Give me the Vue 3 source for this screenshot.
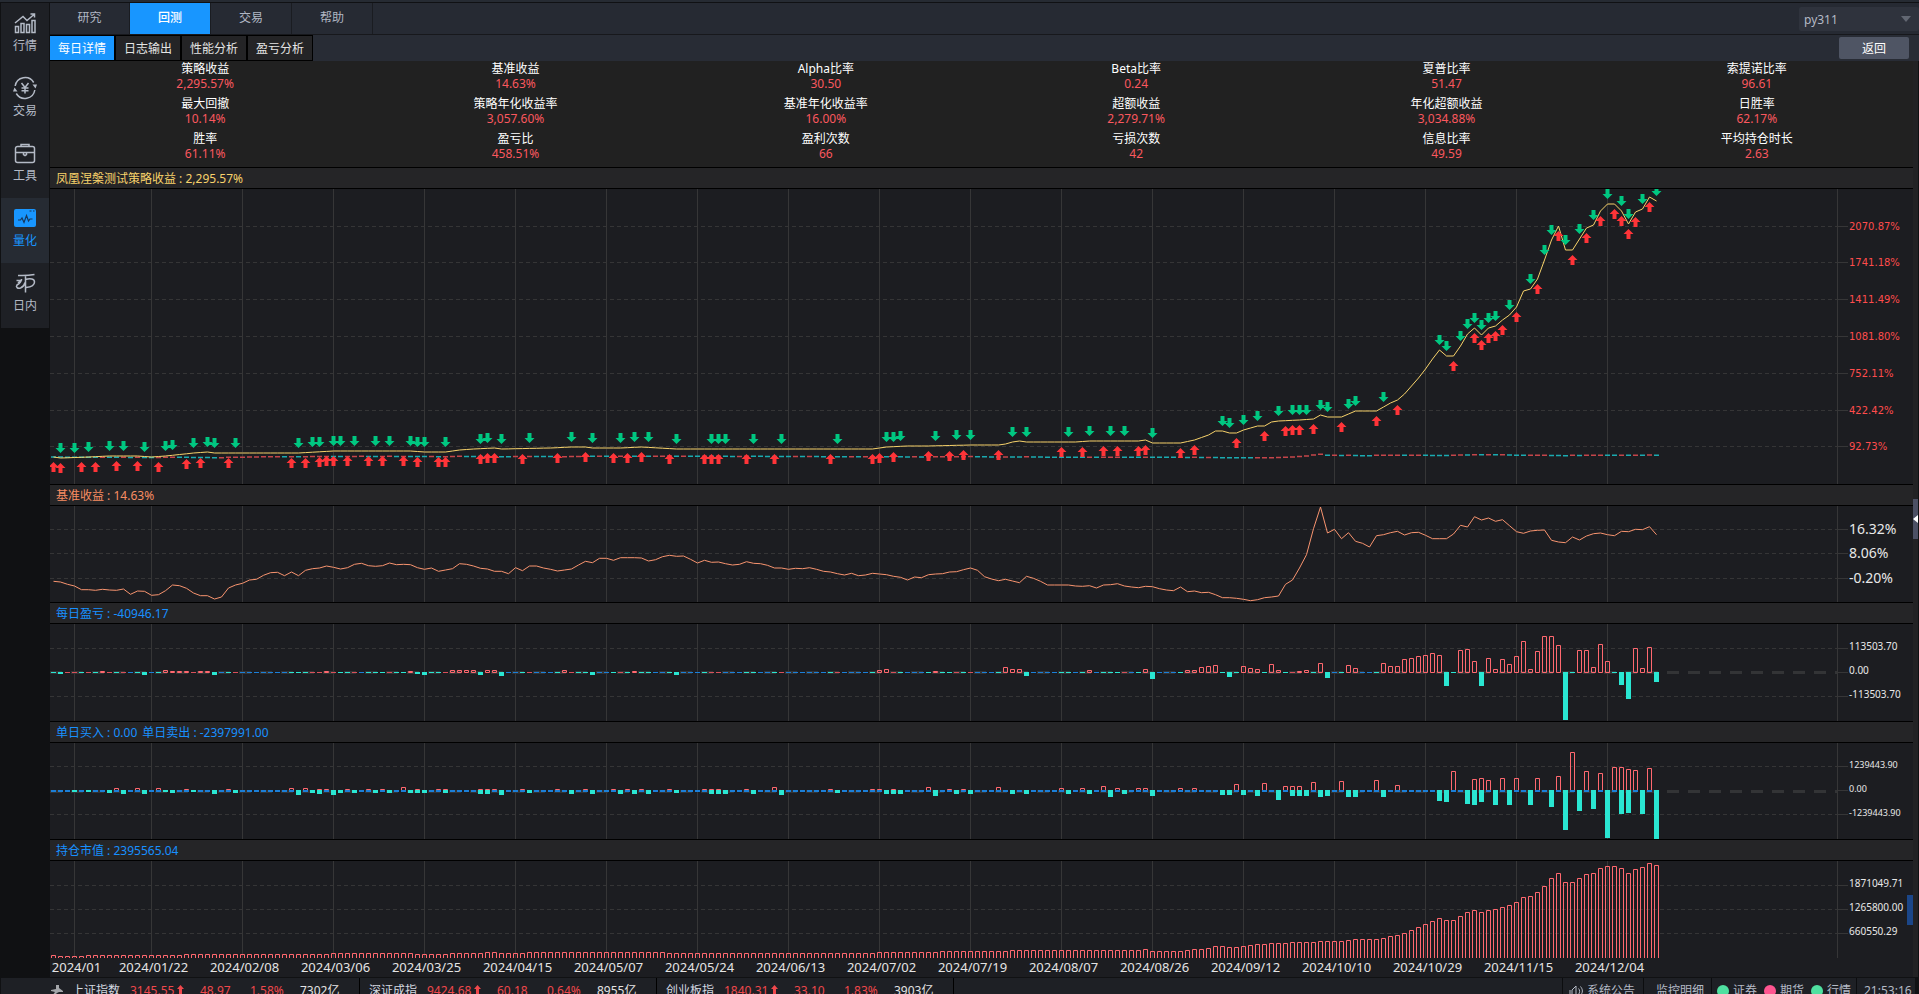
<script setup>
import { ref } from 'vue'

const sideItems = [
  { id: 'quote', label: '行情' },
  { id: 'trade', label: '交易' },
  { id: 'tools', label: '工具' },
  { id: 'quant', label: '量化' },
  { id: 'intraday', label: '日内' },
]
const activeSide = ref('quant')

const tabs = ['研究', '回测', '交易', '帮助']
const activeTab = ref('回测')

const subTabs = ['每日详情', '日志输出', '性能分析', '盈亏分析']
const activeSub = ref('每日详情')

const envName = ref('py311')

const stats = [
  ['策略收益', '2,295.57%'], ['基准收益', '14.63%'], ['Alpha比率', '30.50'],
  ['Beta比率', '0.24'], ['夏普比率', '51.47'], ['索提诺比率', '96.61'],
  ['最大回撤', '10.14%'], ['策略年化收益率', '3,057.60%'], ['基准年化收益率', '16.00%'],
  ['超额收益', '2,279.71%'], ['年化超额收益', '3,034.88%'], ['日胜率', '62.17%'],
  ['胜率', '61.11%'], ['盈亏比', '458.51%'], ['盈利次数', '66'],
  ['亏损次数', '42'], ['信息比率', '49.59'], ['平均持仓时长', '2.63'],
]

// One trading day takes STEP pixels; its bar is centred on cx(day).
const STEP = 7
const cx = (i) => 3.5 + i * STEP
const DAYS = 230

// Strategy equity curve: [day, y] knots, straight in between.
const equityKnots = [
  [0, 268], [1, 269], [5, 268], [8, 267], [12, 267], [14, 268], [16, 267], [20, 264], [22, 263],
  [23, 264], [35, 264], [40, 262], [47, 262], [51, 262], [53, 263], [56, 263], [58, 261], [60, 260],
  [63, 259], [64, 260], [71, 259], [74, 258], [76, 258], [77, 259], [81, 259], [84, 258], [89, 260],
  [117, 260], [119, 258], [122, 257], [125, 257], [131, 256], [135, 256], [136, 255], [137, 253],
  [138, 252], [139, 253], [146, 253], [148, 252], [155, 252], [156, 251], [157, 254], [161, 254],
  [163, 251], [165, 246], [166, 242], [167, 242], [168, 244], [169, 244], [170, 241], [171, 239],
  [172, 237], [173, 237], [174, 233], [175, 232], [178, 231], [180, 230], [181, 226], [182, 228],
  [184, 228], [185, 225], [186, 222], [189, 222], [190, 218], [191, 214], [192, 211], [193, 205],
  [194, 197], [195, 189], [196, 180], [197, 170], [198, 161], [199, 167], [200, 167], [201, 157],
  [202, 145], [203, 139], [204, 146], [205, 139], [206, 137], [207, 131], [208, 126], [209, 118],
  [210, 102], [211, 100], [212, 90], [213, 71], [214, 51], [215, 37], [216, 61], [217, 61],
  [218, 50], [219, 39], [220, 36], [221, 22], [222, 15], [223, 15], [224, 22], [225, 35],
  [226, 23], [227, 20], [228, 8], [229, 12],
]
const equity = Array.from({ length: DAYS }, (_, i) => {
  const k = equityKnots.findIndex((p) => p[0] >= i)
  const [x1, y1] = equityKnots[k]
  if (x1 === i) return y1
  const [x0, y0] = equityKnots[k - 1]
  return y0 + ((y1 - y0) * (i - x0)) / (x1 - x0)
})

const sellDays = [
  1, 3, 5, 8, 10, 13, 16, 17, 20, 22, 23, 26, 35, 37, 38, 40, 41, 43, 46, 48, 51, 52, 53, 56, 61, 62,
  64, 68, 74, 77, 81, 83, 85, 89, 94, 95, 96, 100, 104, 112, 119, 120, 121, 126, 129, 131, 137, 139,
  145, 148, 151, 153, 157, 167, 168, 170, 172, 175, 177, 178, 179, 181, 182, 185, 186, 190, 198, 199,
  201, 202, 203, 204, 205, 206, 208, 211, 213, 214, 216, 218, 220, 222, 224, 225, 227, 229,
]
const buyDays = [
  0, 1, 4, 6, 9, 12, 15, 19, 21, 25, 34, 36, 38, 39, 40, 42, 45, 47, 50, 52, 55, 56, 61, 62, 63, 67,
  72, 76, 80, 82, 84, 88, 93, 94, 95, 99, 103, 111, 117, 118, 120, 125, 128, 130, 135, 144, 147, 150,
  152, 155, 156, 161, 163, 169, 173, 176, 177, 178, 180, 184, 189, 192, 200, 203, 204, 205, 206, 207,
  209, 212, 215, 217, 219, 221, 223, 224, 225, 226, 228,
]

// Benchmark curve, in thirds of a pixel.
const benchmark = [
  544, 546, 553, 558, 569, 569, 571, 568, 570, 571, 567, 583, 573, 574, 586, 584, 572, 555, 557, 565,
  579, 587, 587, 597, 591, 564, 555, 550, 540, 538, 526, 518, 517, 527, 516, 527, 511, 506, 504, 498,
  502, 507, 503, 493, 490, 497, 499, 497, 489, 494, 493, 494, 503, 508, 504, 514, 510, 506, 491, 493,
  498, 505, 507, 514, 514, 521, 503, 512, 498, 498, 504, 508, 513, 510, 507, 495, 484, 488, 475, 475,
  481, 473, 473, 473, 474, 483, 479, 470, 466, 469, 468, 478, 489, 481, 487, 486, 491, 495, 493, 485,
  490, 491, 496, 504, 504, 508, 505, 506, 503, 508, 514, 516, 521, 525, 520, 527, 525, 520, 522, 524,
  529, 532, 540, 531, 533, 524, 522, 521, 516, 515, 509, 504, 511, 530, 537, 542, 538, 543, 548, 529,
  535, 544, 555, 555, 555, 555, 558, 559, 557, 564, 555, 554, 551, 558, 561, 563, 559, 560, 566, 570,
  572, 561, 575, 573, 578, 577, 584, 593, 593, 595, 598, 602, 599, 593, 591, 588, 553, 540, 504, 464,
  386, 321, 399, 388, 416, 398, 424, 430, 441, 407, 404, 398, 394, 405, 398, 397, 406, 416, 416, 416,
  402, 376, 381, 350, 360, 354, 364, 359, 377, 395, 400, 393, 391, 390, 421, 426, 428, 411, 420, 408,
  401, 399, 404, 407, 394, 395, 388, 389, 380, 404,
].map((v) => v / 3 - 106)

// Daily profit: 0 is a flat day, ±1 a barely visible one.
const pnl = [
  -1, -2, 1, 1, -1, 1, -1, 2, 1, -1, 1, 0, -1, -3, 0, -1, 3, 2, 2, 2,
  1, 2, 2, -3, 0, -1, 1, 0, 0, 0, 0, 0, 0, 0, -1, -1, -1, 1, 1, 2,
  1, -1, -1, 1, 0, -1, -1, -1, 1, -1, -1, 2, -2, -3, -1, -1, 1, 3, 3, 3,
  3, -3, 3, 3, -4, 0, 0, -1, 1, 0, 0, 0, -1, 3, 1, -1, -1, -3, 0, 0,
  -1, 1, -1, 2, -1, -1, 0, 0, -1, -3, 0, 0, 0, -1, 1, 1, 0, 0, 0, -1,
  -1, 0, 0, -1, 1, 0, 0, 0, 0, 0, 0, -1, 1, 0, 0, 0, 0, -1, 3, 4,
  1, -1, 0, 0, 0, -1, 2, -1, -1, 1, -1, 1, 0, 0, 0, -1, 6, 4, 4, -4,
  0, 0, 0, 0, -1, -1, 0, -1, 3, 0, -1, -1, -1, 1, 0, -1, 4, -7, 0, 0,
  0, -1, 3, 3, 6, 7, 8, -1, -5, -1, 7, 5, 4, -1, 9, 3, -1, 1, 2, 3,
  -1, 10, -6, 0, -1, 8, 5, 0, 0, -1, 10, 7, 7, 14, 15, 17, 18, 20, 18, -14,
  -1, 23, 24, 12, -14, 15, 4, 14, 9, 17, 32, 4, 22, 37, 37, 28, -48, -1, 23, 23,
  6, 29, 12, -1, -13, -27, 25, 5, 26, -10,
]

const buys = {
  0: 1, 1: 1, 4: 1, 6: 1, 9: 3, 12: 3, 15: 3, 19: 2, 21: 1, 25: 2, 34: 3, 36: 3, 38: 2, 39: 2, 42: 2,
  45: 2, 47: 2, 50: 4, 52: 2, 55: 2, 56: 2, 61: 2, 62: 2, 63: 2, 67: 2, 72: 2, 76: 2, 80: 2, 82: 2,
  84: 2, 88: 2, 93: 2, 94: 2, 95: 2, 99: 2, 103: 4, 111: 2, 117: 2, 118: 2, 120: 2, 125: 4, 128: 2,
  130: 2, 135: 4, 144: 3, 147: 3, 150: 5, 152: 3, 155: 3, 156: 3, 161: 3, 163: 3, 169: 7, 173: 8,
  176: 5, 177: 5, 178: 5, 180: 9, 184: 10, 189: 11, 192: 6, 200: 20, 203: 12, 204: 13, 205: 11,
  207: 13, 209: 13, 212: 13, 215: 15, 217: 39, 219: 20, 221: 18, 223: 24, 224: 24, 225: 22, 226: 21,
  228: 23,
}
const sells = {
  3: 1, 5: 1, 8: 2, 10: 3, 13: 3, 16: 1, 17: 2, 20: 1, 23: 3, 26: 2, 35: 4, 37: 2, 38: 3, 40: 4,
  41: 2, 43: 2, 46: 2, 48: 2, 51: 2, 52: 2, 53: 2, 56: 2, 61: 3, 62: 3, 64: 4, 68: 2, 74: 3, 77: 3,
  81: 3, 83: 3, 85: 3, 89: 2, 94: 3, 95: 3, 96: 3, 100: 3, 104: 4, 112: 2, 119: 3, 120: 3, 121: 3,
  126: 5, 129: 3, 131: 3, 137: 3, 139: 3, 145: 3, 148: 3, 151: 6, 153: 3, 157: 5, 167: 4, 168: 4,
  170: 4, 172: 5, 175: 9, 177: 5, 178: 5, 179: 5, 181: 6, 182: 5, 185: 6, 186: 6, 190: 6, 198: 10,
  199: 11, 202: 13, 203: 14, 204: 11, 206: 14, 208: 14, 211: 14, 214: 16, 216: 39, 218: 20, 220: 18,
  222: 47, 224: 23, 225: 22, 227: 23, 229: 48,
}

const line = (ys) => ys.map((y, i) => `${i ? 'L' : 'M'}${cx(i)} ${y.toFixed(1)}`).join('')
const block = (i, y, h) => `M${i * STEP + 1} ${y}h5v${h}h-5z`
const frame = (i, top, bottom) => `M${i * STEP + 1.5} ${top + 0.5}h4V${bottom - 0.5}h-4z`

const equityPath = line(equity)
const benchPath = line(benchmark)
const sellPath = sellDays
  .map((i) => `M${cx(i) - 2} ${Math.round(equity[i]) - 15}h4v5h3l-5 5l-5 -5h3z`).join('')
const buyPath = buyDays
  .map((i) => `M${cx(i) - 2} ${Math.round(equity[i]) + 15}h4v-5h3l-5 -5l-5 5h3z`).join('')

// The benchmark again, flattened to the scale of the strategy chart.
const flat = { up: '', down: '' }
benchmark.forEach((y, i) => {
  const side = i && y < benchmark[i - 1] ? 'up' : 'down'
  flat[side] += `M${i * STEP + 1} ${(264.5 + y / 27).toFixed(1)}h5v1.5h-5z`
})

const ZERO = 48
const pnlPaths = { gain: '', loss: '', tick: '', flat: '' }
pnl.forEach((v, i) => {
  if (v === 0) pnlPaths.flat += block(i, ZERO, 1)
  else if (v === 1) pnlPaths.tick += block(i, ZERO, 1)
  else if (v > 1) pnlPaths.gain += frame(i, ZERO + 1 - v, ZERO + 1)
  else pnlPaths.loss += block(i, ZERO, -v)
})

const flow = { buy: '', sell: '', flat: '' }
for (let i = 0; i < DAYS; i++) {
  if (buys[i]) flow.buy += frame(i, ZERO - buys[i], ZERO + 1)
  if (sells[i]) flow.sell += block(i, ZERO - 1, sells[i] + 1)
  else flow.flat += block(i, ZERO - 1, 2)
}

const holdPath = equity
  .map((y, i) => {
    const top = 97 - Math.round(2.5 + (268 - y) * 0.355)
    return `M${i * STEP + 1.5} 97V${top + 0.5}h4V97`
  })
  .join('')

const dates = [
  '2024/01', '2024/01/22', '2024/02/08', '2024/03/06', '2024/03/25', '2024/04/15', '2024/05/07',
  '2024/05/24', '2024/06/13', '2024/07/02', '2024/07/19', '2024/08/07', '2024/08/26', '2024/09/12',
  '2024/10/10', '2024/10/29', '2024/11/15', '2024/12/04',
].map((text, k) => ({ text, x: k === 0 ? 24.5 : 101.5 + (k - 1) * 91 }))

const charts = [
  {
    id: 'equity', height: 295, titles: ['凤凰涅槃测试策略收益 : 2,295.57%'], shift: 4,
    rows: [[37, '2070.87%'], [73, '1741.18%'], [110, '1411.49%'], [147, '1081.80%'], [184, '752.11%'], [221, '422.42%'], [257, '92.73%']],
  },
  {
    id: 'bench', height: 96, titles: ['基准收益 : 14.63%'], shift: 5,
    rows: [[23, '16.32%'], [47, '8.06%'], [72, '-0.20%']],
  },
  {
    id: 'pnl', height: 97, titles: ['每日盈亏 : -40946.17'], shift: 2,
    rows: [[24, '113503.70'], [48, '0.00'], [72, '-113503.70']],
  },
  {
    id: 'flow', height: 96, titles: ['单日买入 : 0.00', '单日卖出 : -2397991.00'], shift: 2,
    rows: [[23, '1239443.90'], [47, '0.00'], [71, '-1239443.90']],
  },
  {
    id: 'hold', height: 97, titles: ['持仓市值 : 2395565.04'], shift: 2,
    rows: [[24, '1871049.71'], [48, '1265800.00'], [72, '660550.29']],
  },
]
const hasZeroLine = (id) => id === 'pnl' || id === 'flow'
const gridRows = (c) => (hasZeroLine(c.id) ? c.rows.filter((r) => r[1] !== '0.00') : c.rows)

const indices = [
  ['上证指数', '3145.55', '48.97', '1.58%', '7302亿'],
  ['深证成指', '9424.68', '60.18', '0.64%', '8955亿'],
  ['创业板指', '1840.31', '33.10', '1.83%', '3903亿'],
]
const links = [
  { label: '证券', ok: true },
  { label: '期货', ok: false },
  { label: '行情', ok: true },
]
</script>

<template>
  <div class="app">
    <div class="titlebar-edge"></div>
    <div class="workspace">
      <nav class="sidebar">
        <button
          v-for="item in sideItems"
          :key="item.id"
          type="button"
          class="side-item"
          :class="{ active: item.id === activeSide }"
          @click="activeSide = item.id"
        >
          <svg v-if="item.id === 'quote'" class="side-icon" viewBox="0 0 24 24">
            <path d="M2.5 21.500v-6h3v6zM8 21.500v-9h3v9zM13.500 21.500v-8h3v8zM19 21.500v-12h3v12zM2 12l8-6.500 4 4 7-6M17.500 3h4v3.500" />
          </svg>
          <svg v-else-if="item.id === 'trade'" class="side-icon" viewBox="0 0 24 24">
            <path d="M2.200 10a10 10 0 0 1 18.500-3.500M21.800 14a10 10 0 0 1-18.500 3.500M8.500 7l3.500 4.500 3.500-4.500M12 11.500v6M8.500 12h7M8.500 14.700h7" />
            <path class="solid" d="M19.500 8.500h4.500l-1.500 4zM0 15.500h4.500L1.500 11.500z" />
          </svg>
          <svg v-else-if="item.id === 'tools'" class="side-icon" viewBox="0 0 24 24">
            <path d="M4.500 5.500h15a2 2 0 0 1 2 2v12a2 2 0 0 1-2 2h-15a2 2 0 0 1-2-2v-12a2 2 0 0 1 2-2zM8 5.500v-2h8v2M2.500 11.500h19M10.500 11.500v2l1.500 1 1.500-1v-2" />
          </svg>
          <svg v-else-if="item.id === 'quant'" class="side-icon" viewBox="0 0 24 24">
            <rect class="solid" x="1" y="3" width="22" height="18" rx="2" />
            <path class="cut" d="M16.500 5h2M20 5h1.500M5 14h2.500l1.500-2 2 4.500 2.500-7 2 5.500 1.500-2h2.500" />
          </svg>
          <svg v-else class="side-icon" viewBox="0 0 24 24">
            <path d="M5 4.500c5 .3 11 0 16.500-1M12.500 4.500v17M3.500 9.500h4M8.500 8c0 3-2 4.500-4.500 6-1.500 2 .5 4 3.500 3 2.500-1 4-3 4.500-5.500M5 12l4-3.500M12.500 8.500c5-1.500 9-.5 9 2.500 0 3.500-4 5-8.500 5.500" />
          </svg>
          <span>{{ item.label }}</span>
        </button>
      </nav>

      <main class="main">
        <header class="tabbar">
          <button
            v-for="t in tabs"
            :key="t"
            type="button"
            class="tab"
            :class="{ active: t === activeTab }"
            @click="activeTab = t"
          >{{ t }}</button>
          <div class="env">
            <select v-model="envName" aria-label="Python 环境">
              <option value="py311">py311</option>
            </select>
            <svg class="caret" viewBox="0 0 10 6"><path d="M0 0h10L5 6z" /></svg>
          </div>
        </header>

        <div class="subbar">
          <button
            v-for="t in subTabs"
            :key="t"
            type="button"
            class="subtab"
            :class="{ active: t === activeSub }"
            @click="activeSub = t"
          >{{ t }}</button>
          <button type="button" class="back">返回</button>
        </div>

        <div class="content">
          <div class="report">
            <dl class="stats">
              <div v-for="s in stats" :key="s[0]" class="stat">
                <dt>{{ s[0] }}</dt>
                <dd>{{ s[1] }}</dd>
              </div>
            </dl>

            <section v-for="c in charts" :key="c.id" class="chart" :class="c.id">
              <h2 class="chart-title"><span v-for="t in c.titles" :key="t">{{ t }}</span></h2>
              <div class="chart-body">
                <svg class="plot" :height="c.height">
                  <line
                    v-for="r in gridRows(c)"
                    :key="r[1]"
                    class="grid-row"
                    x1="0"
                    x2="100%"
                    :y1="r[0] + 0.5"
                    :y2="r[0] + 0.5"
                  />
                  <line
                    v-for="d in dates"
                    :key="d.text"
                    class="grid-col"
                    :x1="d.x"
                    :x2="d.x"
                    y1="0"
                    y2="100%"
                  />
                  <line v-if="hasZeroLine(c.id)" class="zero" x1="0" x2="100%" y1="48.500" y2="48.500" />

                  <template v-if="c.id === 'equity'">
                    <path class="flat-up" :d="flat.up" />
                    <path class="flat-down" :d="flat.down" />
                    <path class="equity-line" :d="equityPath" />
                    <path class="buy-mark" :d="buyPath" />
                    <path class="sell-mark" :d="sellPath" />
                  </template>
                  <path v-else-if="c.id === 'bench'" class="bench-line" :d="benchPath" />
                  <template v-else-if="c.id === 'pnl'">
                    <path class="bar-gain" :d="pnlPaths.gain" />
                    <path class="bar-tick" :d="pnlPaths.tick" />
                    <path class="bar-loss" :d="pnlPaths.loss" />
                    <path class="bar-flat" :d="pnlPaths.flat" />
                  </template>
                  <template v-else-if="c.id === 'flow'">
                    <path class="bar-gain" :d="flow.buy" />
                    <path class="bar-loss" :d="flow.sell" />
                    <path class="bar-flat" :d="flow.flat" />
                  </template>
                  <path v-else class="bar-gain" :d="holdPath" />
                </svg>
                <svg class="axis" :height="c.height">
                  <line class="grid-col" x1="0.500" x2="0.500" y1="0" y2="100%" />
                  <g v-for="r in c.rows" :key="r[1]">
                    <line class="grid-col" x1="0" x2="11" :y1="r[0] + 0.5" :y2="r[0] + 0.5" />
                    <text x="12" :y="r[0] + c.shift">{{ r[1] }}</text>
                  </g>
                </svg>
              </div>
            </section>

            <svg class="dates" height="19">
              <text v-for="d in dates" :key="d.text" :x="d.x + 2" y="14">{{ d.text }}</text>
            </svg>
            <div class="scroll-thumb"></div>
          </div>
          <div class="rail">
            <button type="button" class="rail-handle" aria-label="展开侧栏">
              <svg viewBox="0 0 5 8"><path d="M5 0v8L0 4z" /></svg>
            </button>
          </div>
        </div>
      </main>
    </div>

    <footer class="status">
      <svg class="pin" viewBox="0 0 12 12"><path d="M5 0h3v3l4 3v1H8l-2 1-4 4-1-1 3-4-4-1V5l5-1z" /></svg>
      <div v-for="q in indices" :key="q[0]" class="index">
        <span class="name">{{ q[0] }}</span>
        <span class="up">{{ q[1] }}<svg class="arrow" viewBox="0 0 7 10"><path d="M3.500 0L7 4H5v6H2V4H0z" /></svg></span>
        <span class="up">{{ q[2] }}</span>
        <span class="up">{{ q[3] }}</span>
        <span>{{ q[4] }}</span>
      </div>
      <div class="status-right">
        <button type="button" class="cell notice">
          <svg class="horn" viewBox="0 0 14 12"><path d="M3 11V5l4-4v10M9.500 3.500c1.500 1.500 1.500 4 0 6M11.500 1.500c2.500 3 2.500 6 0 9M1 5v5" /></svg>
          系统公告
        </button>
        <button type="button" class="cell monitor">监控明细</button>
        <div class="cell links">
          <span v-for="l in links" :key="l.label" class="link"><i class="dot" :class="{ ok: l.ok }"></i>{{ l.label }}</span>
        </div>
        <time class="cell clock">21:53:16</time>
      </div>
    </footer>
  </div>
</template>

<style>
html,
body {
  background: #101113;
}
</style>

<style scoped>
.app {
  display: flex;
  flex-direction: column;
  height: 100vh;
  overflow: hidden;
  background: #101113;
  color: #e4e4e4;
  font-family: "Noto Sans", "Noto Sans CJK SC", sans-serif;
  font-size: 12px;
  line-height: 15px;
}
button {
  margin: 0;
  padding: 0;
  border: 0;
  font: inherit;
  color: inherit;
  cursor: pointer;
}
svg {
  display: block;
  flex: none;
}
.titlebar-edge {
  flex: none;
  height: 2px;
  background: #262b33;
  border-bottom: 1px solid #101114;
}
.workspace {
  display: flex;
  flex: none;
}

.sidebar {
  flex: none;
  width: 48px;
  margin: 0 1px;
}
.side-item {
  display: flex;
  flex-direction: column;
  align-items: center;
  gap: 3px;
  width: 100%;
  height: 65px;
  padding-top: 8px;
  background: #1e2025;
  color: #b4bac6;
}
.side-item.active {
  background: #262b33;
  color: #1896ff;
}
.side-icon {
  width: 24px;
  height: 24px;
  fill: none;
  stroke: currentColor;
  stroke-width: 1.500;
}
.side-icon .solid {
  fill: currentColor;
  stroke: none;
}
.side-icon .cut {
  stroke: #17375c;
  stroke-width: 1.200;
}

.main {
  flex: 1;
  min-width: 0;
}
.tabbar {
  display: flex;
  height: 31px;
  background: #262a33;
  border-bottom: 1px solid #17181c;
}
.tab {
  width: 81px;
  padding-bottom: 2px;
  background: transparent;
  border-right: 1px solid #1a1c21;
  color: #b0b6c3;
}
.tab:first-child {
  width: 80px;
}
.tab.active {
  background: #1896ff;
  color: #fff;
  font-weight: 500;
}
.env {
  position: relative;
  width: 120px;
  height: 24px;
  margin: 4px 0 0 auto;
}
.env select {
  appearance: none;
  width: 100%;
  height: 100%;
  padding: 0 5px;
  border: 0;
  border-radius: 2px;
  background: #2f333d;
  color: #b4bac6;
  font: inherit;
}
.caret {
  position: absolute;
  top: 9px;
  right: 8px;
  width: 10px;
  height: 6px;
  fill: #626772;
  pointer-events: none;
}

.subbar {
  display: flex;
  height: 26px;
  background: #282c35;
}
.subtab {
  width: 66px;
  background: #242426;
  border: 1px solid #000;
  color: #e4e4e4;
}
.subtab.active {
  background: #1896ff;
  color: #fff;
}
.subtab:first-child {
  border-left: 0;
  width: 65px;
}
.back {
  width: 70px;
  height: 22px;
  margin: 2px 10px 0 auto;
  border-radius: 2px;
  background: #4f5564;
  color: #fff;
}

.content {
  display: flex;
}
.report {
  position: relative;
  flex: 1;
  min-width: 0;
}
.stats {
  display: grid;
  grid-template-columns: repeat(6, 1fr);
  row-gap: 5px;
  margin: 0;
  padding: 0 1px 6px 0;
  background: #212121;
  text-align: center;
}
.stat dt {
  color: #fff;
}
.stat dd {
  margin: 0;
  color: #fb585f;
}

.chart {
  background: #1c1d21;
}
.chart-title {
  display: flex;
  gap: 5px;
  margin: 0;
  padding: 0 6px;
  height: 20px;
  border: solid #000;
  border-width: 1px 0;
  background: #252527;
  color: #1890ff;
  font-size: 12px;
  font-weight: 400;
  line-height: 22px;
}
.equity .chart-title {
  color: #f8d36b;
}
.bench .chart-title {
  color: #f88d63;
}
.chart-body {
  display: flex;
}
.plot {
  flex: 1;
  min-width: 0;
}
.axis {
  width: 76px;
}
.axis text {
  fill: #e8e8e8;
  font-size: 10px;
}
.equity .axis text {
  fill: #ff4c4c;
  font-family: "DejaVu Sans", sans-serif;
}
.bench .axis text {
  font-size: 14px;
}
.flow .axis text {
  font-size: 9px;
}
.grid-row {
  stroke: #353536;
  stroke-dasharray: 4 3;
}
.grid-col {
  stroke: #363637;
}
.zero {
  stroke: #333436;
  stroke-width: 3;
  stroke-dasharray: 12 9;
}
.equity-line,
.bench-line {
  fill: none;
  stroke: #f8d36b;
}
.bench-line {
  stroke: #f8946f;
}
.flat-up {
  fill: #c4454a;
}
.flat-down {
  fill: #1aaab0;
}
.buy-mark {
  fill: #ff3438;
}
.sell-mark {
  fill: #00c781;
}
.bar-gain {
  fill: none;
  stroke: #ff686f;
}
.bar-tick {
  fill: #d8505a;
}
.bar-loss {
  fill: #2ae6d2;
}
.bar-flat {
  fill: #1b7fd8;
}
.dates {
  width: 100%;
  background: #1c1d21;
}
.dates text {
  fill: #e4e4e4;
  font-size: 13px;
  text-anchor: middle;
}
.scroll-thumb {
  position: absolute;
  right: 0;
  bottom: 52px;
  width: 6px;
  height: 30px;
  background: #1b4688;
}
.rail {
  flex: none;
  display: flex;
  align-items: center;
  width: 5px;
  margin-right: 1px;
  background: #222224;
}
.rail-handle {
  width: 5px;
  height: 40px;
  background: #4c5064;
}
.rail-handle svg {
  width: 5px;
  height: 8px;
  fill: #fff;
}

.status {
  flex: none;
  display: flex;
  height: 26px;
  margin: 1px 4px 0 1px;
  background: #1e2025;
  line-height: 26px;
  white-space: nowrap;
}
.pin {
  width: 12px;
  height: 12px;
  margin: 7px 0 0 50px;
  fill: #a4a6aa;
}
.index {
  display: grid;
  grid-template-columns: 58px 70px 50px 50px 1fr;
  box-sizing: border-box;
  width: 297px;
  padding-left: 9px;
  border-right: 1px solid #000;
}
.name {
  color: #d4d8e0;
}
.up {
  color: #f0484c;
}
.arrow {
  display: inline-block;
  width: 7px;
  height: 10px;
  margin-left: 3px;
  fill: currentColor;
}
.status-right {
  display: flex;
  margin-left: auto;
  color: #b4bac6;
}
.cell {
  display: flex;
  align-items: center;
  box-sizing: border-box;
  background: transparent;
  border-left: 1px solid #0c0d0f;
}
.notice {
  gap: 4px;
  width: 81px;
  padding-left: 6px;
}
.horn {
  width: 14px;
  height: 12px;
  fill: none;
  stroke: currentColor;
}
.monitor {
  width: 68px;
  padding-left: 12px;
}
.links {
  gap: 7px;
  width: 145px;
  padding-left: 5px;
}
.link {
  display: flex;
  align-items: center;
  gap: 4px;
}
.dot {
  width: 12px;
  height: 12px;
  border-radius: 50%;
  background: #ff5590;
}
.dot.ok {
  background: #4fe0a0;
}
.clock {
  width: 59px;
  padding-left: 7px;
}
</style>
